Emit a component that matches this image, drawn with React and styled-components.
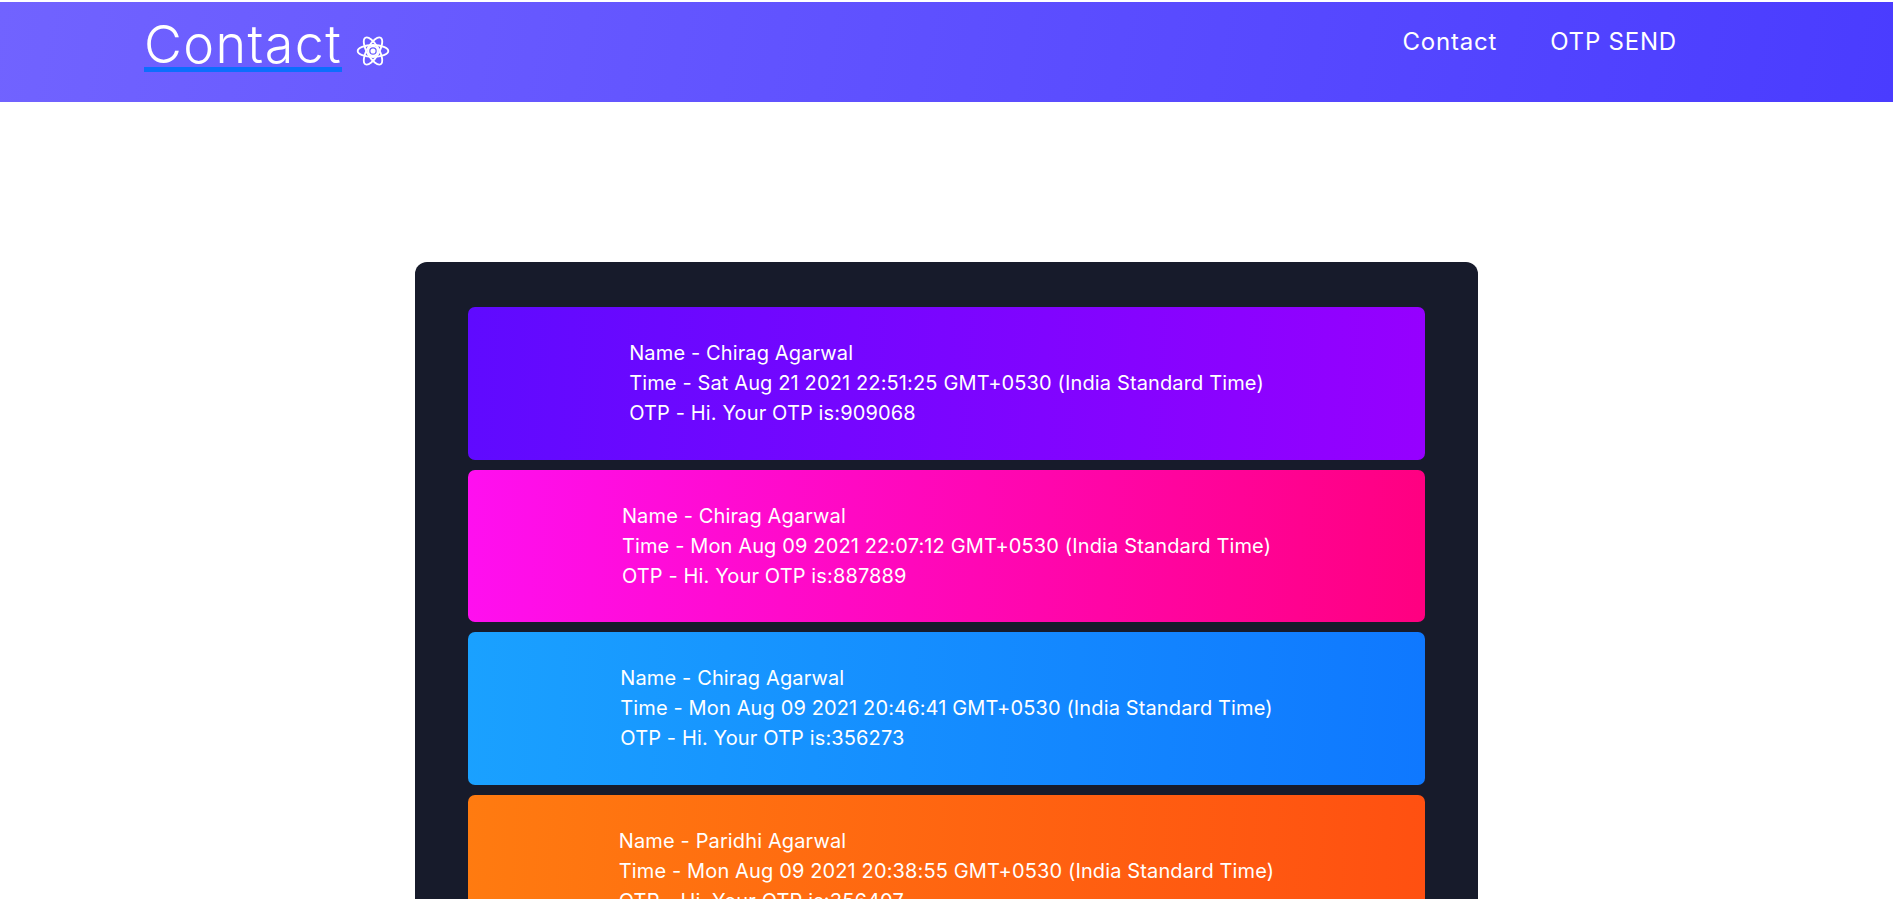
import React from 'react'
import styled, { createGlobalStyle } from 'styled-components'

const GlobalStyle = createGlobalStyle`
  * {
    box-sizing: border-box;
  }
  html, body {
    margin: 0;
    padding: 0;
    background: #fff;
    font-family: Inter, "Liberation Sans", sans-serif;
  }
`

const messages = [
  { name: 'Chirag Agarwal', time: 'Sat Aug 21 2021 22:51:25 GMT+0530 (India Standard Time)', otp: '909068', from: '#5f0aff', to: '#9600ff' },
  { name: 'Chirag Agarwal', time: 'Mon Aug 09 2021 22:07:12 GMT+0530 (India Standard Time)', otp: '887889', from: '#ff0ff0', to: '#ff0080' },
  { name: 'Chirag Agarwal', time: 'Mon Aug 09 2021 20:46:41 GMT+0530 (India Standard Time)', otp: '356273', from: '#1aa1ff', to: '#0f78ff' },
  { name: 'Paridhi Agarwal', time: 'Mon Aug 09 2021 20:38:55 GMT+0530 (India Standard Time)', otp: '356407', from: '#ff7b10', to: '#ff5011' },
]

function ReactLogo() {
  return (
    <Logo viewBox="0 0 40 40" fill="none" stroke="#fff" strokeWidth="2.2">
      <ellipse cx="20" cy="20" rx="18" ry="7" />
      <ellipse cx="20" cy="20" rx="18" ry="7" transform="rotate(60 20 20)" />
      <ellipse cx="20" cy="20" rx="18" ry="7" transform="rotate(120 20 20)" />
      <circle cx="20" cy="20" r="5.5" />
      <circle cx="20" cy="20" r="3" fill="#fff" stroke="none" />
    </Logo>
  )
}

export default function App() {
  return (
    <>
      <GlobalStyle />
      <Navbar>
        <Brand>
          <Title>Contact</Title>
          <ReactLogo />
        </Brand>
        <Links>
          <NavLink href="#contact">Contact</NavLink>
          <NavLink href="#otp">OTP SEND</NavLink>
        </Links>
      </Navbar>
      <Panel>
        {messages.map((m) => (
          <Card key={m.time} $from={m.from} $to={m.to}>
            <CardText>
              <div>Name - {m.name}</div>
              <div>Time - {m.time}</div>
              <div>OTP - Hi. Your OTP is:{m.otp}</div>
            </CardText>
          </Card>
        ))}
      </Panel>
    </>
  )
}

const Navbar = styled.nav`
  margin-top: 2px;
  height: 100px;
  padding: 0 216px 0 144px;
  display: flex;
  justify-content: space-between;
  background: linear-gradient(100deg, #7163ff, #4a3cff);
`

const Brand = styled.div`
  display: flex;
  align-items: flex-start;
  gap: 14px;
  padding-top: 20px;
`

const Title = styled.h1`
  margin: 0;
  color: #fff;
  font-size: 52px;
  font-weight: 300;
  line-height: 45px;
  letter-spacing: 1.4px;
  border-bottom: 5px solid #0d6efd;
`

const Logo = styled.svg`
  width: 34px;
  height: 34px;
  margin-top: 12px;
`

const Links = styled.div`
  display: flex;
  gap: 53px;
  padding-top: 25px;
`

const NavLink = styled.a`
  color: #fff;
  font-size: 24px;
  line-height: 30px;
  letter-spacing: 0.8px;
  text-decoration: none;
  height: 30px;
`

const Panel = styled.main`
  width: 1063px;
  margin: 160px 0 0 415px;
  padding: 45px 53px;
  display: flex;
  flex-direction: column;
  gap: 10px;
  background: #171b2b;
  border-radius: 12px;
`

const Card = styled.div`
  height: 152.5px;
  display: flex;
  align-items: center;
  justify-content: center;
  border-radius: 7px;
  background: linear-gradient(93deg, ${(p) => p.$from}, ${(p) => p.$to});
`

const CardText = styled.div`
  color: #fff;
  font-size: 20px;
  line-height: 30px;
  letter-spacing: 0.13px;
`
